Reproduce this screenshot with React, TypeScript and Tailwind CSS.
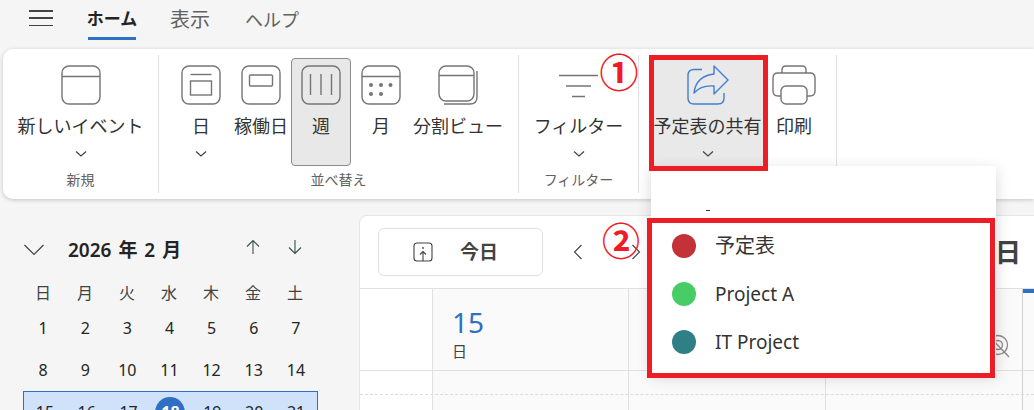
import React from "react";

const FONT = '"Noto Sans", "Noto Sans CJK JP", sans-serif';

const Chevron = () => (
  <svg width="14" height="8" viewBox="0 0 14 8" fill="none" stroke="#424242" strokeWidth="1.2">
    <path d="M2 1.5 L7 6 L12 1.5" />
  </svg>
);

const IconFrame = ({ children }: { children?: React.ReactNode }) => (
  <svg width="40" height="40" viewBox="0 0 40 40" fill="none" stroke="#757575" strokeWidth="1.4">
    <rect x="1" y="1" width="38" height="38" rx="7" />
    {children}
  </svg>
);

const icons: Record<string, React.ReactNode> = {
  event: <IconFrame><path d="M1 11.5 H39" /></IconFrame>,
  day: (
    <IconFrame>
      <path d="M9.5 9.5 H30.5" />
      <rect x="9.5" y="16" width="21" height="14" />
    </IconFrame>
  ),
  work: <IconFrame><rect x="8.5" y="10" width="23" height="11" rx="1" /></IconFrame>,
  week: <IconFrame><path d="M9.5 9 V30 M20 9 V30 M30.5 9 V30" /></IconFrame>,
  month: (
    <IconFrame>
      <path d="M1 11.5 H39" />
      <g fill="#757575" stroke="none">
        <circle cx="10" cy="20" r="2" /><circle cx="20" cy="20" r="2" /><circle cx="29.5" cy="20" r="2" />
        <circle cx="10" cy="29" r="2" /><circle cx="20" cy="29" r="2" />
      </g>
    </IconFrame>
  ),
  split: (
    <svg width="40" height="40" viewBox="0 0 40 40" fill="none" stroke="#757575" strokeWidth="1.4">
      <rect x="1" y="1" width="35" height="35" rx="7" />
      <path d="M1 10.5 H36" />
      <path d="M39 6 V32 Q39 39 32 39 H6" />
    </svg>
  ),
  filter: (
    <svg width="40" height="40" viewBox="0 0 40 40" fill="none" stroke="#757575" strokeWidth="1.3">
      <path d="M0 10.5 H39 M7 21 H32 M13 31.5 H26" />
    </svg>
  ),
  share: (
    <svg width="42" height="40" viewBox="0 0 42 40" fill="none" stroke="#3f7fd6" strokeWidth="1.4" strokeLinejoin="round">
      <path d="M15 4.5 H7 Q1 4.5 1 10.5 V33 Q1 39 7 39 H31 Q37 39 37 33 V28" />
      <path d="M27 1 L41 15 L27 29 V21 Q14 20 7 28 Q9 11 27 9 Z" />
    </svg>
  ),
  print: (
    <svg width="44" height="40" viewBox="0 0 44 40" fill="none" stroke="#757575" strokeWidth="1.4">
      <path d="M10 8 V5 Q10 1 14 1 H30 Q34 1 34 5 V8" />
      <path d="M9 31 H6 Q1 31 1 26 V13 Q1 8 6 8 H38 Q43 8 43 13 V26 Q43 31 38 31 H35" />
      <rect x="9" y="21" width="26" height="18" rx="5" fill="#fff" />
    </svg>
  ),
};

function RibbonButton({ icon, label, chevron, width, active, tint }: {
  icon: string; label: string; chevron?: boolean; width: string; active?: boolean; tint?: boolean;
}) {
  return (
    <div
      className={`${width} h-[108px] flex flex-col items-center rounded-[4px] shrink-0 ${
        active ? "bg-[#e8e8e8] border border-[#8c8c8c] pt-[6px]" : "pt-[7px]"
      } ${tint ? "bg-[#e9e9e9]" : ""}`}
    >
      <div className="h-[40px] flex items-center justify-center">{icons[icon]}</div>
      <div className="mt-[7px] h-[28px] flex items-center text-[18px] text-[#333] whitespace-nowrap">{label}</div>
      {chevron && <div className="mt-[9px] h-[10px] flex items-center"><Chevron /></div>}
    </div>
  );
}

function Group({ width, label, children, last }: { width: string; label?: string; children: React.ReactNode; last?: boolean }) {
  return (
    <div className={`${width} my-[6px] h-[138px] flex flex-col pt-[3px] shrink-0 ${last ? "" : "border-r border-[#e1e1e1]"}`}>
      <div className="flex h-[108px]">{children}</div>
      <div className="h-[27px] flex items-center justify-center text-[14px] text-[#616161]">{label}</div>
    </div>
  );
}

const weeks = [
  ["1", "2", "3", "4", "5", "6", "7"],
  ["8", "9", "10", "11", "12", "13", "14"],
  ["15", "16", "17", "18", "19", "20", "21"],
];

function MiniCalendar() {
  return (
    <div className="w-[359px] shrink-0 pt-[21px] pl-[22px]">
      <div className="h-[28px] flex items-center">
        <svg width="22" height="14" viewBox="0 0 22 14" fill="none" stroke="#424242" strokeWidth="1.2" className="ml-[1px]">
          <path d="M1.5 2 L11 11.5 L20.5 2" />
        </svg>
        <span className="ml-[23px] w-[185px] text-[19px] font-semibold text-[#242424] [word-spacing:2px] whitespace-nowrap">2026 年 2 月</span>
        <svg width="14" height="16" viewBox="0 0 14 16" fill="none" stroke="#35524a" strokeWidth="1.1" className="ml-[-7px] mt-[-6px]">
          <path d="M7 15 V1.5 M1 7.5 L7 1.5 L13 7.5" />
        </svg>
        <svg width="14" height="16" viewBox="0 0 14 16" fill="none" stroke="#35524a" strokeWidth="1.1" className="ml-[28px] mt-[-6px]">
          <path d="M7 1 V14.5 M1 8.5 L7 14.5 L13 8.5" />
        </svg>
      </div>
      <div className="mt-[12px] w-[294px] grid grid-cols-7 h-[31px] pt-[3px] text-[16px] text-[#424242]">
        {["日", "月", "火", "水", "木", "金", "土"].map((d) => (
          <div key={d} className="flex items-center justify-center">{d}</div>
        ))}
      </div>
      {weeks.map((w, i) => (
        <div
          key={i}
          className={`w-[295px] grid grid-cols-7 h-[42px] text-[16px] text-[#242424] ${
            i === 2 ? "bg-[#cfe2fa] border border-[#2f6fc4] ml-[1px]" : ""
          }`}
        >
          {w.map((d) => (
            <div key={d} className="flex items-center justify-center">
              {d === "18" ? (
                <span className="w-[30px] h-[30px] rounded-full bg-[#2f6fc4] text-white font-bold flex items-center justify-center">{d}</span>
              ) : d}
            </div>
          ))}
        </div>
      ))}
    </div>
  );
}

function CalendarPanel() {
  return (
    <div className="flex-1 min-w-0 bg-white rounded-tl-lg border-t border-l border-[#e6e6e6] overflow-hidden">
      <div className="h-[73px] flex items-center pl-[18px] border-b border-[#e0e0e0]">
        <div className="w-[165px] h-[48px] border border-[#e0e0e0] rounded-[6px] flex items-center">
          <svg width="20" height="20" viewBox="0 0 20 20" fill="none" stroke="#424242" strokeWidth="1.1" className="ml-[34px]">
            <rect x="1" y="1" width="18" height="18" rx="3" />
            <circle cx="10" cy="6" r="0.9" fill="#424242" stroke="none" />
            <path d="M10 19 V10 M7 12.5 L10 9.5 L13 12.5" />
          </svg>
          <span className="ml-[27px] text-[19px] font-bold text-[#424242]">今日</span>
        </div>
        <svg width="12" height="16" viewBox="0 0 12 16" fill="none" stroke="#424242" strokeWidth="1.1" className="ml-[29px]">
          <path d="M9.5 1 L2.5 8 L9.5 15" />
        </svg>
        <svg width="12" height="16" viewBox="0 0 12 16" fill="none" stroke="#424242" strokeWidth="1.1" className="ml-[46px]">
          <path d="M2.5 1 L9.5 8 L2.5 15" />
        </svg>
        <span className="ml-auto mr-[13px] text-[26px] font-bold text-[#424242]">日</span>
      </div>
      <div className="h-[82px] flex bg-[#fafafa] border-b border-[#e0e0e0]">
        <div className="w-[73px] bg-white border-r border-[#e0e0e0]" />
        <div className="w-[196px] border-r border-[#e0e0e0] pl-[19px] pt-[16px]">
          <div className="text-[28px] leading-[34px] text-[#2f6fc4]">15</div>
          <div className="text-[15px] leading-[24px] text-[#424242]">日</div>
        </div>
        <div className="w-[197px] border-r border-[#e0e0e0]" />
        <div className="w-[197px] border-r border-[#cfcfcf] relative flex justify-end pr-[11px] pt-[45px]">
          <svg width="24" height="24" viewBox="0 0 24 24" fill="none" stroke="#8a8a8a" strokeWidth="1.3">
            <circle cx="11" cy="11" r="9.5" />
            <circle cx="11" cy="11" r="4.5" />
            <path d="M3 3 L22 23" />
          </svg>
        </div>
        <div className="flex-1"><div className="h-[4px] bg-[#2f6fc4]" /></div>
      </div>
      <div className="flex h-[60px] bg-[#fafafa]">
        <div className="w-[73px] bg-white border-r border-[#e0e0e0]" />
        <div className="w-[196px] border-r border-[#e0e0e0]" />
        <div className="w-[197px] border-r border-[#e0e0e0]" />
        <div className="w-[197px] border-r border-[#cfcfcf]" />
      </div>
    </div>
  );
}

export default function App() {
  return (
    <div className="relative w-[1034px] h-[410px] overflow-hidden bg-[#f5f5f5]" style={{ fontFamily: FONT }}>
      {/* tabs */}
      <div className="h-[49px] flex items-start pl-[29px]">
        <div className="mt-[10px] w-[24px] h-[16px] flex flex-col justify-between">
          <div className="h-[1.5px] bg-[#424242]" />
          <div className="h-[1.5px] bg-[#424242]" />
          <div className="h-[1.5px] bg-[#424242]" />
        </div>
        <div className="ml-[35px] w-[48px] h-[40px] border-b-[3px] border-[#2f6fc4] flex items-center justify-center text-[17px] font-bold text-[#242424] whitespace-nowrap">ホーム</div>
        <div className="ml-[33px] w-[42px] h-[40px] flex items-center justify-center text-[20px] text-[#616161]">表示</div>
        <div className="ml-[34px] h-[40px] flex items-center text-[18px] text-[#616161]">ヘルプ</div>
      </div>

      {/* ribbon */}
      <div className="ml-[3px] h-[150px] flex bg-white rounded-l-[10px] shadow-[0_1px_4px_rgba(0,0,0,0.2)]">
        <Group width="w-[156px]" label="新規">
          <RibbonButton icon="event" label="新しいイベント" chevron width="w-[155px]" />
        </Group>
        <Group width="w-[360px]" label="並べ替え">
          <div className="pl-[12px] flex">
            <RibbonButton icon="day" label="日" chevron width="w-[60px]" />
            <RibbonButton icon="work" label="稼働日" width="w-[60px]" />
            <RibbonButton icon="week" label="週" width="w-[60px]" active />
            <RibbonButton icon="month" label="月" width="w-[60px]" />
            <RibbonButton icon="split" label="分割ビュー" width="w-[94px]" />
          </div>
        </Group>
        <Group width="w-[120px]" label="フィルター">
          <RibbonButton icon="filter" label="フィルター" chevron width="w-[119px]" />
        </Group>
        <Group width="w-[198px]">
          <div className="pl-[12px] flex">
            <RibbonButton icon="share" label="予定表の共有" chevron width="w-[113px]" tint />
            <RibbonButton icon="print" label="印刷" width="w-[60px]" />
          </div>
        </Group>
      </div>

      {/* body */}
      <div className="flex mt-[16px]">
        <MiniCalendar />
        <CalendarPanel />
      </div>

      {/* dashed row line */}
      <div className="absolute left-[360px] right-0 top-[394px] border-t border-dashed border-[#dcdcdc]" />

      {/* dropdown */}
      <div className="absolute left-[651px] top-[166px] w-[345px] h-[207px] bg-white shadow-[0_4px_14px_rgba(0,0,0,0.16)]">
        <div className="absolute left-[55px] top-[44px] w-[4px] h-px bg-[#333]" />
        <div className="pt-[56px] flex flex-col">
          {[
            { name: "予定表", color: "bg-[#c23236]", size: "text-[20px]" },
            { name: "Project A", color: "bg-[#46cd66]", size: "text-[19px]" },
            { name: "IT Project", color: "bg-[#2f8086]", size: "text-[19px]" },
          ].map((it) => (
            <div key={it.name} className="h-[48px] flex items-center pl-[21px]">
              <span className={`w-[24px] h-[24px] rounded-full ${it.color}`} />
              <span className={`ml-[19px] ${it.size} text-[#333]`}>{it.name}</span>
            </div>
          ))}
        </div>
      </div>

      {/* annotations */}
      <div className="absolute left-[649px] top-[55px] w-[119px] h-[116px] border-[5px] border-[#ee1c25]" />
      <div className="absolute left-[647px] top-[218px] w-[348px] h-[160px] border-[5px] border-[#ee1c25]" />
      <div className="absolute left-[598px] top-[45px] w-[42px] h-[54px] flex items-center justify-center text-[39px] font-bold text-[#ee1c25]">①</div>
      <div className="absolute left-[600px] top-[213px] w-[42px] h-[54px] flex items-center justify-center text-[38px] font-bold text-[#ee1c25]">②</div>
    </div>
  );
}
